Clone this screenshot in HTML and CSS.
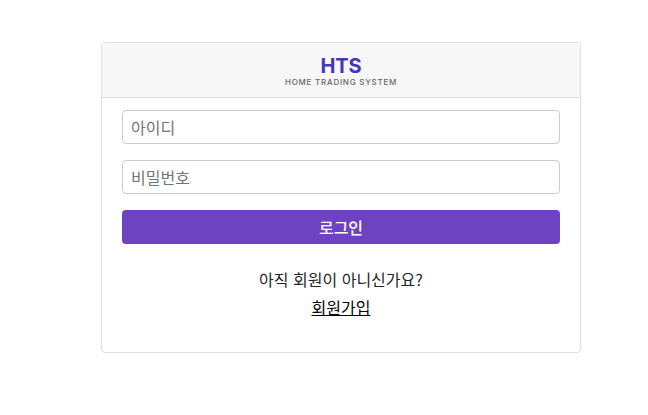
FILE: index.html
```html
<!DOCTYPE html>
<html lang="ko">
<head>
    <meta charset="UTF-8">
    <title>HTS 로그인</title>
    <link rel="stylesheet" href="styles.css">
</head>
<body>
    <div class="card">
        <header class="card-header">
            <div class="logo-title">HTS</div>
            <div class="logo-sub">HOME TRADING SYSTEM</div>
        </header>
        <form class="card-body">
            <input type="text" class="form-input" placeholder="아이디">
            <input type="password" class="form-input" placeholder="비밀번호">
            <button type="button" class="login-btn">로그인</button>
            <div class="signup">
                <p>아직 회원이 아니신가요?</p>
                <a href="#">회원가입</a>
            </div>
        </form>
    </div>
</body>
</html>
```

FILE: styles.css
```css
* {
    margin: 0;
    padding: 0;
    box-sizing: border-box;
}

body {
    background: #fff;
    color: #212529;
    font-family: "Noto Sans CJK KR", "Noto Sans", sans-serif;
    font-size: 16px;
    padding-top: 42px;
}

.card {
    width: 480px;
    height: 311px;
    margin-left: 101px;
    border: 1px solid #dfdfdf;
    border-radius: 4px;
}

.card-header {
    height: 55px;
    padding-top: 12px;
    background: #f7f7f7;
    border-bottom: 1px solid #dfdfdf;
    border-radius: 3px 3px 0 0;
    text-align: center;
    font-family: Inter, sans-serif;
}

.logo-title {
    color: #4338b5;
    font-size: 20px;
    font-weight: 700;
    letter-spacing: -0.2px;
    line-height: 22px;
}

.logo-sub {
    color: #666;
    font-size: 8px;
    font-weight: 500;
    letter-spacing: 0.75px;
    line-height: 10px;
}

.card-body {
    display: flex;
    flex-direction: column;
    padding: 12px 20px 0;
}

.form-input {
    height: 34px;
    padding: 0 8px;
    margin-bottom: 16px;
    border: 1px solid #ccc;
    border-radius: 4px;
    font: inherit;
    color: #212529;
}

.form-input::placeholder {
    color: #6c757d;
    opacity: 1;
}

.login-btn {
    height: 34px;
    border: none;
    border-radius: 4px;
    background: #6f42c1;
    color: #fff;
    font: inherit;
    font-weight: 500;
    cursor: pointer;
}

.signup {
    margin-top: 21px;
    text-align: center;
    color: #212529;
    line-height: 28px;
}

.signup a {
    color: #000;
}
```
